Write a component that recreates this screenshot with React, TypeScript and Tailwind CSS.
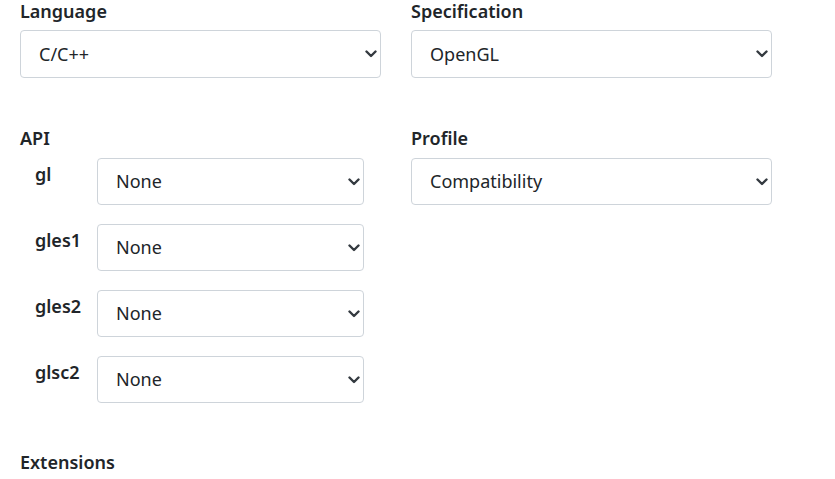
const font = { fontFamily: '"Noto Sans", "Open Sans", sans-serif' };

function Select({ value, className = "" }: { value: string; className?: string }) {
  return (
    <div className={`relative ${className}`}>
      <select
        defaultValue={value}
        className="w-full h-full appearance-none rounded-[4px] border border-[#ced4da] bg-white pl-[18px] pr-8 text-[18px] text-[#212529] outline-none"
      >
        <option>{value}</option>
      </select>
      <svg
        className="pointer-events-none absolute right-[4px] top-1/2 -translate-y-1/2"
        width="12"
        height="8"
        viewBox="0 0 12 8"
        fill="none"
      >
        <path d="M1.5 1.5L6 6L10.5 1.5" stroke="#343a40" strokeWidth="2.4" strokeLinecap="round" strokeLinejoin="round" />
      </svg>
    </div>
  );
}

const apis = ["gl", "gles1", "gles2", "glsc2"];

export default function App() {
  return (
    <div className="min-h-screen bg-white pl-[20px] text-[#212529]" style={font}>
      <div className="grid grid-cols-[361px_361px] gap-x-[30px]">
        <div>
          <label className="block h-[24px] text-[18px] font-semibold leading-[22px]">Language</label>
          <Select value="C/C++" className="mt-[6px] h-[48px]" />
        </div>
        <div>
          <label className="block h-[24px] text-[18px] font-semibold leading-[22px]">Specification</label>
          <Select value="OpenGL" className="mt-[6px] h-[48px]" />
        </div>

        <div className="mt-[49px]">
          <label className="block h-[24px] text-[18px] font-semibold leading-[22px]">API</label>
          <div className="mt-[7px] flex flex-col gap-[19px] pl-[15px]">
            {apis.map((a) => (
              <div key={a} className="flex">
                <span className="w-[62px] pt-[4px] text-[18px] font-semibold leading-[24px]">{a}</span>
                <Select value="None" className="h-[47px] w-[267px]" />
              </div>
            ))}
          </div>
        </div>
        <div className="mt-[49px]">
          <label className="block h-[24px] text-[18px] font-semibold leading-[22px]">Profile</label>
          <Select value="Compatibility" className="mt-[7px] h-[47px]" />
        </div>
      </div>
      <div className="mt-[48px] text-[18px] font-semibold leading-[22px]">Extensions</div>
    </div>
  );
}
